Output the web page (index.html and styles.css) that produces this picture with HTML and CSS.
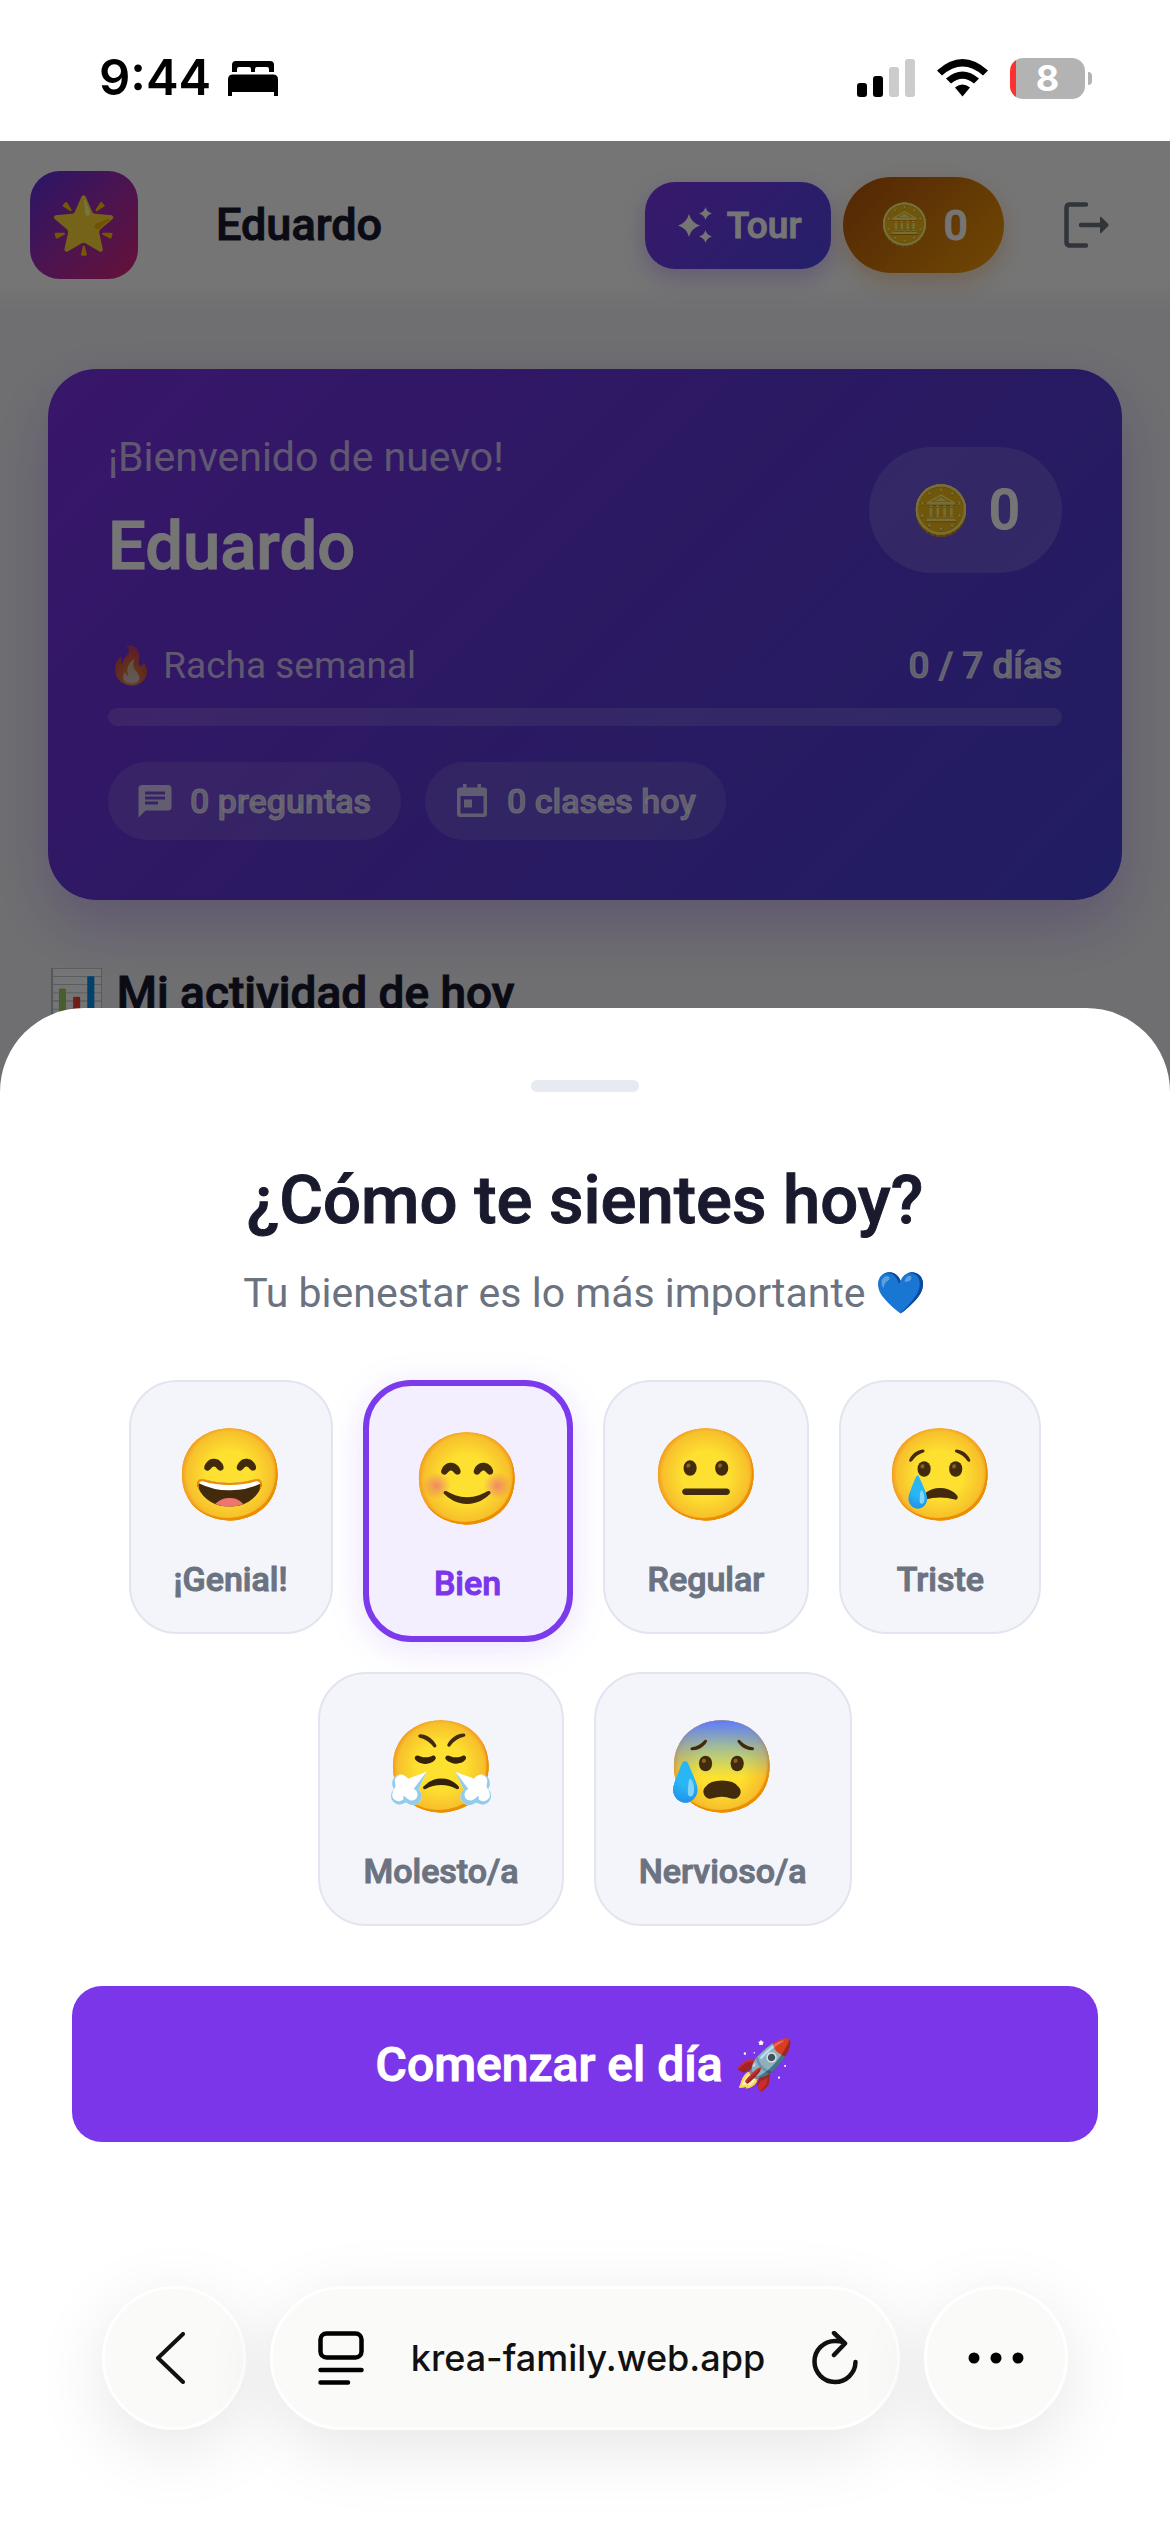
FILE: index.html
```html
<!DOCTYPE html>
<html lang="es">
<head>
<meta charset="utf-8">
<meta name="viewport" content="width=device-width, initial-scale=1">
<title>Krea Family</title>
<link rel="stylesheet" href="styles.css">
</head>
<body>
<div class="status">
  <div class="status-side">
    <span class="clock">9:44</span>
    <svg class="bed" viewBox="0 0 52 36" aria-hidden="true"><path d="M5 12V5q0-4 4-4h34q4 0 4 4v7h-5V9q0-2-2-2H30q-2 0-2 2v3h-4V9q0-2-2-2H12q-2 0-2 2v3z"/><path d="M6 14.500h40q5 0 5 5V36h-4v-4H5v4H1V19.500q0-5 5-5z"/></svg>
  </div>
  <div class="status-side status-right">
    <svg class="signal" viewBox="0 0 58 38" aria-hidden="true"><rect y="24" width="10" height="14" rx="3"/><rect x="16" y="17" width="10" height="21" rx="3"/><g fill="#ccc"><rect x="32" y="8" width="10" height="30" rx="3"/><rect x="48" width="10" height="38" rx="3"/></g></svg>
    <svg class="wifi" viewBox="0 0 51 38" aria-hidden="true"><path d="M0 11.500Q25.500-11.500 51 11.500L46 16.500Q25.500-1.500 5 16.500z"/><path d="M9 19.500Q25.500 5.500 42 19.500L37 24.500Q25.500 15 14 24.500z"/><path d="M18 28.500Q25.500 22.500 33 28.500L25.500 37.500z"/></svg>
    <div class="battery"><span class="battery-body">8</span><span class="battery-cap"></span></div>
  </div>
</div>

<div class="stage">
  <div class="app">
    <header class="topbar">
      <div class="logo">🌟</div>
      <h1 class="user">Eduardo</h1>
      <button class="tour" type="button">
        <svg viewBox="0 0 34 36" aria-hidden="true"><path d="M11 7Q13.500 16 22 18.500Q13.500 21 11 30Q8.500 21 0 18.500Q8.500 16 11 7zM27.500 0Q28.700 5 34 6.500Q28.700 8 27.500 13Q26.300 8 21 6.500Q26.300 5 27.500 0zM27.500 23Q28.700 28 34 29.500Q28.700 31 27.500 36Q26.300 31 21 29.500Q26.300 28 27.500 23z"/></svg>
        Tour
      </button>
      <div class="coins"><span class="coin">🪙</span>0</div>
      <button class="logout" type="button" aria-label="Salir">
        <svg viewBox="0 0 46 46" aria-hidden="true"><path d="M22 2.500H6Q2.500 2.500 2.500 6V40Q2.500 43.500 6 43.500H22M17 23H38" fill="none" stroke="#6b7280" stroke-width="4.500" stroke-linecap="round"/><path d="M36 16V30q0 2 1.500 .7L44 24.300q1.300-1.300 0-2.600L37.500 15.300Q36 14 36 16z" fill="#6b7280"/></svg>
      </button>
    </header>

    <main class="content">
      <section class="hero">
        <div class="hero-top">
          <div>
            <p class="welcome">¡Bienvenido de nuevo!</p>
            <h2 class="hero-name">Eduardo</h2>
          </div>
          <div class="hero-coins"><span class="coin">🪙</span>0</div>
        </div>
        <div class="streak"><span>🔥 Racha semanal</span><b>0 / 7 días</b></div>
        <div class="bar"></div>
        <div class="chips">
          <span class="chip">
            <svg viewBox="0 0 34 34" aria-hidden="true"><path fill-rule="evenodd" d="M4 1H30q3.500 0 3.500 3.500V23q0 3.500-3.500 3.500H7.500L.5 33.500V4.500Q.5 1 4 1zM7 7.500v3h20v-3zM7 12.500v3h20v-3zM7 17.500v3h13v-3z"/></svg>
            0 preguntas
          </span>
          <span class="chip">
            <svg viewBox="0 0 34 34" aria-hidden="true"><path fill-rule="evenodd" d="M5 3.500H8V0h3.500v3.500h11V0H26v3.500h3q3 0 3 3V30q0 3-3 3H5q-3 0-3-3V6.500q0-3 3-3zM5.500 12v17.500h23V12zM9 15.500h8v8H9z"/></svg>
            0 clases hoy
          </span>
        </div>
      </section>
      <h2 class="section-title">📊 Mi actividad de hoy</h2>
    </main>
  </div>

  <div class="layer">
    <form class="sheet">
      <div class="handle"></div>
      <h2 class="sheet-title">¿Cómo te sientes hoy?</h2>
      <p class="sheet-sub">Tu bienestar es lo más importante 💙</p>
      <div class="moods">
        <label class="mood"><input type="radio" name="mood"><span class="face">😄</span>¡Genial!</label>
        <label class="mood"><input type="radio" name="mood" checked><span class="face">😊</span>Bien</label>
        <label class="mood"><input type="radio" name="mood"><span class="face">😐</span>Regular</label>
        <label class="mood"><input type="radio" name="mood"><span class="face">😢</span>Triste</label>
        <label class="mood"><input type="radio" name="mood"><span class="face">😤</span>Molesto/a</label>
        <label class="mood"><input type="radio" name="mood"><span class="face">😰</span>Nervioso/a</label>
      </div>
      <button class="start" type="button">Comenzar el día 🚀</button>
      <div class="browser">
        <button class="glass round back" type="button" aria-label="Atrás"><svg width="30" height="52" viewBox="0 0 30 52" aria-hidden="true"><path d="M28 2L3 26L28 50" fill="none" stroke="#111" stroke-width="4" stroke-linecap="round" stroke-linejoin="round"/></svg></button>
        <div class="glass address">
          <button class="bare" type="button" aria-label="Página"><svg width="46" height="54" viewBox="0 0 46 54" aria-hidden="true"><rect x="2.500" y="2.500" width="41" height="24" rx="6" fill="none" stroke="#000" stroke-width="4.500"/><path d="M2.500 39H43.500M2.500 51.500H30" stroke="#000" stroke-width="4.500" stroke-linecap="round"/></svg></button>
          <span class="url">krea-family.web.app</span>
          <button class="bare" type="button" aria-label="Recargar"><svg width="46" height="54" viewBox="0 0 46 54" aria-hidden="true"><path d="M32 11.500Q28 10 23 10A20.500 20.500 0 1 0 43.500 31M22 2L33 12.500L22 24" fill="none" stroke="#111" stroke-width="4.500" stroke-linecap="round" stroke-linejoin="round"/></svg></button>
        </div>
        <button class="glass round" type="button" aria-label="Más"><svg width="56" height="12" viewBox="0 0 56 12" aria-hidden="true"><circle cx="6" cy="6" r="5.500"/><circle cx="28" cy="6" r="5.500"/><circle cx="50" cy="6" r="5.500"/></svg></button>
      </div>
    </form>
  </div>
</div>
</body>
</html>
```

FILE: styles.css
```css
* { box-sizing: border-box; }

body {
  margin: 0;
  min-height: 100vh;
  display: flex;
  flex-direction: column;
  font-family: Roboto, "Noto Color Emoji", sans-serif;
  color: #1a1a2e;
  background: #fff;
}

h1, h2, p { margin: 0; }
button { border: 0; padding: 0; font: inherit; color: inherit; background: none; cursor: pointer; }
svg { display: block; }

/* Medium weight with a thin outline, for every emphasised text */
.user, .tour, .coins, .hero-name, .hero-coins, .streak b, .chip,
.section-title, .sheet-title, .mood, .start {
  font-weight: 500;
  -webkit-text-stroke: 1px currentColor;
}

/* Phone status bar */
.status {
  height: 141px;
  padding: 15px 78px 0 99px;
  display: flex;
  align-items: center;
  justify-content: space-between;
  color: #000;
}
.status-side { display: flex; align-items: center; gap: 16px; }
.status-right { gap: 22px; }
.clock { font: 600 49px/60px Inter, sans-serif; }
.bed { width: 52px; height: 36px; }
.signal { width: 58px; height: 38px; }
.wifi { width: 51px; height: 38px; }
.battery { display: flex; align-items: center; gap: 3px; }
.battery-body {
  width: 75px;
  height: 41px;
  border-radius: 13px;
  background: linear-gradient(90deg, #ff3030 6px, #b3b3b3 6px);
  color: #fff;
  font: 700 36px/41px Inter, sans-serif;
  text-align: center;
}
.battery-cap { width: 4px; height: 13px; border-radius: 0 6px 6px 0; background: #b3b3b3; }

/* App page, under the mood dialog */
.stage { flex: 1; position: relative; display: flex; flex-direction: column; overflow: hidden; }
.app { flex: 1; background: #f2f2f7; }

.topbar {
  height: 168px;
  padding: 0 60px 0 30px;
  display: flex;
  align-items: center;
  background: linear-gradient(#fff 85%, #f2f2f7);
}
.logo {
  width: 108px;
  height: 108px;
  display: grid;
  place-items: center;
  border-radius: 30px;
  background: linear-gradient(135deg, #5b2fe0, #a52cb0 50%, #db2777);
  font-size: 54px;
  line-height: 60px;
}
.user { flex: 1; padding-left: 78px; font-size: 45px; line-height: 54px; }
.tour {
  height: 87px;
  padding: 0 30px 0 33px;
  display: flex;
  align-items: center;
  gap: 15px;
  border-radius: 30px;
  background: linear-gradient(135deg, #7c36ea, #4f46e5);
  box-shadow: 0 9px 24px rgba(124, 58, 237, .3);
  color: #fff;
  font-size: 37px;
}
.tour svg { width: 34px; height: 36px; fill: #fff; }
.coins {
  height: 96px;
  margin-left: 12px;
  padding: 0 36px;
  display: flex;
  align-items: center;
  gap: 13px;
  border-radius: 48px;
  background: linear-gradient(135deg, #b45309, #f59e0b);
  box-shadow: 0 9px 24px rgba(217, 119, 6, .3);
  color: #fff;
  font-size: 43px;
}
.coin { font-size: 41px; }
.logout { margin-left: 60px; }
.logout svg { width: 46px; height: 46px; }

.content { padding: 60px 48px; }
.hero {
  height: 531px;
  padding: 60px;
  border-radius: 48px;
  background: linear-gradient(135deg, #7c30e8, #5e38d6 50%, #4840d8);
  box-shadow: 0 24px 60px rgba(124, 58, 237, .3);
  color: #fff;
}
.hero-top { height: 162px; display: flex; align-items: center; justify-content: space-between; }
.welcome { font-size: 41px; line-height: 57px; color: rgba(255, 255, 255, .7); }
.hero-name { margin-top: 15px; font-size: 67px; line-height: 90px; }
.hero-coins {
  height: 126px;
  padding: 0 42px;
  display: flex;
  align-items: center;
  gap: 18px;
  border-radius: 63px;
  background: rgba(255, 255, 255, .15);
  font-size: 55px;
}
.hero-coins .coin { font-size: 48px; }
.streak {
  margin-top: 49px;
  display: flex;
  justify-content: space-between;
  font-size: 37px;
  line-height: 51px;
  color: rgba(255, 255, 255, .7);
}
.streak b { color: rgba(255, 255, 255, .75); }
.bar { height: 18px; margin-top: 17px; border-radius: 9px; background: rgba(255, 255, 255, .15); }
.chips { margin-top: 36px; display: flex; gap: 24px; }
.chip {
  height: 78px;
  padding: 0 30px;
  display: flex;
  align-items: center;
  gap: 18px;
  border-radius: 39px;
  background: rgba(255, 255, 255, .12);
  color: rgba(255, 255, 255, .7);
  font-size: 34px;
}
.chip svg { width: 34px; height: 34px; fill: currentColor; }
.section-title { margin-top: 63px; font-size: 46px; line-height: 60px; }

/* Mood dialog */
.layer {
  position: absolute;
  inset: 0;
  display: flex;
  flex-direction: column;
  justify-content: flex-end;
  background: rgba(0, 0, 0, .54);
}
.sheet {
  padding: 72px 72px 102px;
  display: flex;
  flex-direction: column;
  border-radius: 84px 84px 0 0;
  background: #fff;
}
.handle { width: 108px; height: 12px; align-self: center; border-radius: 6px; background: #e8eaf2; }
.sheet-title { margin-top: 63px; text-align: center; font-size: 67px; line-height: 90px; }
.sheet-sub { margin-top: 18px; text-align: center; font-size: 41px; line-height: 60px; color: #6b7280; }
.moods { margin-top: 57px; display: flex; flex-wrap: wrap; align-items: flex-start; justify-content: center; gap: 30px; }
.mood {
  padding: 43px 43px 33px;
  display: flex;
  flex-direction: column;
  align-items: center;
  gap: 33px;
  border: 2px solid #e2e5ef;
  border-radius: 48px;
  background: #f4f5fa;
  color: #6b7280;
  font-size: 34px;
  line-height: 39px;
  cursor: pointer;
}
.mood input { position: absolute; opacity: 0; pointer-events: none; }
.mood:has(input:checked) {
  border: 6px solid #7c3aed;
  background: #f3effe;
  box-shadow: 0 6px 36px rgba(124, 58, 237, .15);
  color: #7c36ea;
}
.face { font-size: 90px; line-height: 102px; }
.start {
  height: 156px;
  margin-top: 60px;
  border-radius: 30px;
  background: #7c36ea;
  color: #fff;
  font-size: 48px;
}

/* Floating browser controls */
.browser { margin: 144px 30px 0; display: flex; gap: 24px; }
.glass {
  height: 144px;
  display: flex;
  align-items: center;
  justify-content: center;
  border: 3px solid #fff;
  border-radius: 72px;
  background: #fafaf9;
  box-shadow: 0 18px 72px rgba(0, 0, 0, .1);
}
.round { flex: 0 0 144px; }
.back { padding-right: 9px; }
.address { flex: 1; justify-content: space-between; padding: 0 39px 0 45px; }
.url { font: 500 36px/48px Inter, sans-serif; color: #111; }
```
